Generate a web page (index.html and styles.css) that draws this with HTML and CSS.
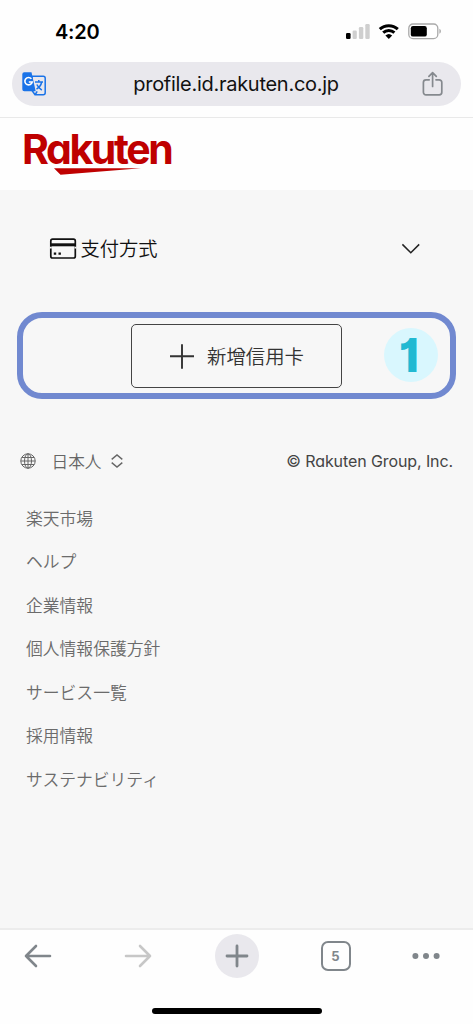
FILE: index.html
```html
<!DOCTYPE html>
<html lang="ja">
<head>
<meta charset="utf-8">
<meta name="viewport" content="width=device-width, initial-scale=1">
<title>Rakuten</title>
<link rel="stylesheet" href="styles.css">
</head>
<body>
<div class="phone">
  <div class="status">
    <span class="clock">4:20</span>
    <svg class="status-icons" width="96" height="18" viewBox="0 0 96 18">
      <rect x="0" y="10" width="4.6" height="6" rx="1.2" fill="#000"/>
      <g fill="#cfcfcf"><rect x="6.6" y="7.5" width="4.2" height="8.5" rx="1.2"/><rect x="12.9" y="4" width="4.4" height="12" rx="1.2"/><rect x="19.3" y="1" width="4.4" height="15" rx="1.2"/></g>
      <g fill="none" stroke="#000" stroke-width="3"><path d="M33.8 6.2a13.2 13.2 0 0 1 18 0"/><path d="M37.2 9.7a8.2 8.2 0 0 1 11.2 0"/></g>
      <path d="M39.4 12.5a5 5 0 0 1 6.8 0L42.8 16z"/>
      <rect x="62.8" y="1" width="29" height="14.6" rx="4.2" fill="#fff" stroke="#a9a9a9" stroke-width="1.3"/>
      <rect x="64.8" y="3" width="16" height="10.6" rx="2.2"/>
      <path d="M93.4 5.8c2 .8 2 4.2 0 5z" fill="#a9a9a9"/>
    </svg>
  </div>
  <div class="address-row">
    <div class="address">
      <svg width="24" height="24" viewBox="0 0 24 24">
        <path d="M10 4.2h11.2a2 2 0 0 1 2 2v14.6a2 2 0 0 1-2 2h-8.2L10 18.5z" fill="#e9e8ed" stroke="#1a73e8" stroke-width="1.5"/>
        <path d="M2.3.2h7.2l4.2 19H2.3a2 2 0 0 1-2-2v-15a2 2 0 0 1 2-2z" fill="#1a73e8"/>
        <path d="M9.4 6.8a3.7 3.7 0 1 0 .8 3.2H6.8" fill="none" stroke="#fff" stroke-width="1.6"/>
        <path d="M13 10h8M16.8 8v2M19.7 10c-.6 3-3 5.8-5.2 7.2M14.8 12.5c1 2 3 4.3 5 5.6M13.2 22.5l2-3.2" fill="none" stroke="#1a73e8" stroke-width="1.5"/>
      </svg>
      <span class="url">profile.id.rakuten.co.jp</span>
      <svg width="22" height="26" viewBox="0 0 22 26" fill="none" stroke="#85898e" stroke-width="1.7" stroke-linecap="round" stroke-linejoin="round">
        <path d="M7.2 8.8H4a2.6 2.6 0 0 0-2.6 2.6v9.8A2.6 2.6 0 0 0 4 23.8h13.2a2.6 2.6 0 0 0 2.6-2.6v-9.8a2.6 2.6 0 0 0-2.6-2.6H14M10.6 15.5V1.7M6.9 5.4l3.7-3.7 3.7 3.7"/>
      </svg>
    </div>
  </div>
  <header class="brand">
    <span class="logo-text">Rakuten</span>
    <svg class="swoosh" width="88" height="7" viewBox="0 0 88 7" fill="#bf0000"><path d="M0 .3h87L6.5 6.7z"/></svg>
  </header>
  <main>
    <div class="section-head">
      <svg width="28" height="22" viewBox="0 0 28 22" fill="none" stroke="#111" stroke-width="1.7">
        <rect x="1.8" y="1.2" width="24.5" height="18.8" rx="1.8"/>
        <path d="M1.5 6.8h25" stroke-width="3"/>
        <path d="M.8 9.6h2M25.5 9.6h2" stroke="#f7f7f7"/>
        <path d="M4.8 15.6h2.4M9.5 15.6h2.4" stroke-width="2.2"/>
      </svg>
      <h1>支付方式</h1>
      <svg class="chevron" width="20" height="12" viewBox="0 0 20 12" fill="none" stroke="#222" stroke-width="1.5"><path d="M1.4 1.4l8.4 8.4 8.4-8.4"/></svg>
    </div>
    <div class="highlight">
      <button class="add-card">
        <svg width="26" height="26" viewBox="0 0 26 26" stroke="#333" stroke-width="1.9"><path d="M1 13.3h24M13 1.3v24.4"/></svg>
        <span>新增信用卡</span>
      </button>
      <span class="step">1</span>
    </div>
    <div class="meta">
      <svg width="16" height="16" viewBox="0 0 16 16" fill="none" stroke="#666" stroke-width="1"><circle cx="8" cy="8" r="7.2"/><ellipse cx="8" cy="8" rx="3.5" ry="7.2"/><path d="M8 .8v14.4M.8 8h14.4M1.8 4.5h12.4M1.8 11.5h12.4"/></svg>
      <span class="lang">日本人</span>
      <svg width="12" height="14" viewBox="0 0 12 14" fill="none" stroke="#666" stroke-width="1.4"><path d="M.7 5.4L6 1l5.3 4.4M.7 8.6L6 13l5.3-4.4"/></svg>
      <span class="copyright">© Rakuten Group, Inc.</span>
    </div>
    <nav class="links">
      <a>楽天市場</a>
      <a>ヘルプ</a>
      <a>企業情報</a>
      <a>個人情報保護方針</a>
      <a>サービス一覧</a>
      <a>採用情報</a>
      <a>サステナビリティ</a>
    </nav>
  </main>
  <footer class="toolbar">
    <div class="tools">
      <svg width="28" height="24" viewBox="0 0 28 24" fill="none" stroke="#80868b" stroke-width="2.6" stroke-linecap="round" stroke-linejoin="round"><path d="M26 12H2M12 2L2 12l10 10"/></svg>
      <svg width="28" height="24" viewBox="0 0 28 24" fill="none" stroke="#c7c7c7" stroke-width="2.6" stroke-linecap="round" stroke-linejoin="round"><path d="M2 12h24M16 2l10 10-10 10"/></svg>
      <span class="new-tab"><svg width="24" height="24" viewBox="0 0 24 24" stroke="#80868b" stroke-width="2.8" stroke-linecap="round"><path d="M2 12h20M12 2v20"/></svg></span>
      <span class="tab-count">5</span>
      <svg width="28" height="8" viewBox="0 0 28 8" fill="#80868b"><circle cx="3.4" cy="4" r="3"/><circle cx="14" cy="4" r="3"/><circle cx="24.6" cy="4" r="3"/></svg>
    </div>
    <div class="home-bar"></div>
  </footer>
</div>
</body>
</html>
```
FILE: styles.css
```css
* { box-sizing: border-box; }
body { margin: 0; background: #fefefe; font-family: Inter, "Noto Sans CJK JP", sans-serif; }
svg { display: block; flex: none; }
.phone { width: 473px; height: 1024px; display: flex; flex-direction: column; overflow: hidden; }
.status { height: 62px; padding: 1px 31px 0 55px; display: flex; align-items: center; justify-content: space-between; }
.clock { font-size: 20px; font-weight: 600; line-height: 24px; letter-spacing: -0.2px; color: #000; }
.address-row { height: 56px; padding: 0 12px; border-bottom: 1px solid #e9e9e9; }
.address { height: 44px; padding: 0 17px 0 10px; border-radius: 22px; background: #e9e8ed; display: flex; align-items: center; justify-content: space-between; }
.url { margin-left: 4px; font-size: 20px; line-height: 24px; color: #111; letter-spacing: -0.28px; }
.brand { height: 72px; padding: 6px 22px; display: flex; flex-direction: column; align-items: flex-start; }
.logo-text { font-size: 41px; font-weight: 650; line-height: 50px; letter-spacing: -2.4px; color: #bf0000; font-feature-settings: "cv11"; }
.swoosh { margin: -6px 0 0 32px; }
main { flex: 1; background: #f7f7f7; display: flex; flex-direction: column; }
.section-head { height: 117px; padding: 1px 52px 0 49px; display: flex; align-items: center; }
h1 { margin: -2px 0 0 3.5px; font: 350 19.3px/28px "Noto Sans CJK SC", sans-serif; color: #111; }
.chevron { margin-left: auto; }
.highlight { height: 87px; margin: 5px 17px 0; padding: 0 12px 2px 108px; border: 6px solid #7189d0; border-radius: 25px; display: flex; align-items: center; justify-content: space-between; }
.add-card { width: 211px; height: 64px; margin-top: 2px; padding: 1px 0 0 37px; border: 1.5px solid #444; border-radius: 5px; background: transparent; display: flex; align-items: center; gap: 12px; font: 350 19.4px/28px "Noto Sans CJK TC", sans-serif; color: #333; }
.step { width: 54px; height: 54px; padding-right: 4px; border-radius: 50%; background: #d9f7fe; color: #21b9d2; font-size: 47px; font-weight: 800; line-height: 54px; text-align: center; font-feature-settings: "cv01"; }
.meta { height: 28px; margin-top: 47px; padding: 1px 20px 0; display: flex; align-items: center; color: #666; }
.lang { margin: 0 9px 0 15.5px; font: 350 16.7px/28px "Noto Sans CJK JP", sans-serif; }
.copyright { margin-left: auto; font-size: 16px; letter-spacing: -0.1px; color: #444; font-feature-settings: "cv11"; }
.links { padding: 22.5px 26px 0; display: flex; flex-direction: column; }
.links a { height: 43.6px; font: 350 16.8px/43.6px "Noto Sans CJK JP", sans-serif; color: #6b6b6b; }
.toolbar { height: 96px; border-top: 2px solid #ececec; display: flex; flex-direction: column; align-items: center; }
.tools { width: 100%; height: 52px; padding-right: 1px; display: grid; grid-template-columns: 76px 124px 74px 123px 58px; align-items: center; justify-items: center; }
.new-tab { width: 44px; height: 44px; border-radius: 50%; background: #e9e8ed; display: grid; place-items: center; }
.tab-count { width: 30px; height: 30px; border: 2.5px solid #80868b; border-radius: 7px; display: grid; place-items: center; font-size: 13px; font-weight: 700; color: #80868b; }
.home-bar { width: 170px; height: 6px; margin-top: 26px; border-radius: 3px; background: #000; }
```
